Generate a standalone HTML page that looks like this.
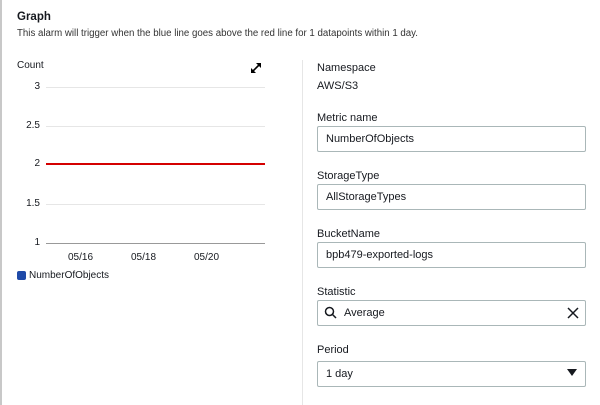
<!DOCTYPE html><html><head><style>
body{margin:0;width:600px;height:405px;background:#fff;font-family:"Liberation Sans",sans-serif;color:#16191f;position:relative;overflow:hidden}
.a{position:absolute}
.lbl{font-size:11px;color:#16191f}
.inp{position:absolute;left:317px;width:269px;height:26px;border:1px solid #aab7b8;border-radius:2px;font-size:11px;line-height:25px;box-sizing:border-box;padding-left:8px}
.yl{position:absolute;font-size:10px;width:40px;text-align:right;left:0}
.g{position:absolute;left:46px;width:219px;height:1px;background:#e6e6e6}
.xl{position:absolute;font-size:10px;top:252px}
</style></head><body>
<div class="a" style="left:0;top:0;width:2px;height:405px;background:#c8c8c8"></div>
<div class="a" style="left:17px;top:11px;font-size:11.5px;font-weight:bold">Graph</div>
<div class="a" style="left:17px;top:28px;font-size:9.7px;color:#333">This alarm will trigger when the blue line goes above the red line for 1 datapoints within 1 day.</div>
<div class="a" style="left:17px;top:60px;font-size:10px">Count</div>
<svg class="a" style="left:249px;top:61px" width="14" height="14" viewBox="0 0 14 14"><path d="M3 11L11 3" stroke="#000" stroke-width="1.6"/><path d="M7 2h5v5zM2 7v5h5z" fill="#000"/></svg>
<div class="yl" style="top:81px">3</div><div class="g" style="top:87px"></div>
<div class="yl" style="top:120px">2.5</div><div class="g" style="top:126px"></div>
<div class="yl" style="top:158px">2</div><div class="a" style="left:46px;top:163px;width:219px;height:2px;background:#d40000"></div>
<div class="yl" style="top:198px">1.5</div><div class="g" style="top:204px"></div>
<div class="yl" style="top:237px">1</div><div class="a" style="left:46px;top:243px;width:219px;height:1px;background:#999"></div>
<div class="xl" style="left:68px">05/16</div><div class="xl" style="left:131px">05/18</div><div class="xl" style="left:194px">05/20</div>
<div class="a" style="left:17px;top:271px;width:9px;height:9px;background:#1f4aa8;border-radius:2px"></div>
<div class="a" style="left:29px;top:270px;font-size:10px">NumberOfObjects</div>
<div class="a" style="left:302px;top:60px;width:1px;height:345px;background:#e6e6e6"></div>
<div class="a lbl" style="left:317px;top:62px">Namespace</div>
<div class="a" style="left:317px;top:80px;font-size:11px">AWS/S3</div>
<div class="a lbl" style="left:317px;top:112px">Metric name</div>
<div class="inp" style="top:126px">NumberOfObjects</div>
<div class="a lbl" style="left:317px;top:170px">StorageType</div>
<div class="inp" style="top:184px">AllStorageTypes</div>
<div class="a lbl" style="left:317px;top:228px">BucketName</div>
<div class="inp" style="top:242px">bpb479-exported-logs</div>
<div class="a lbl" style="left:317px;top:286px">Statistic</div>
<div class="inp" style="top:300px;padding-left:26px">Average</div>
<svg class="a" style="left:324px;top:306px" width="13" height="13"><circle cx="5.5" cy="5.5" r="4" stroke="#16191f" stroke-width="1.5" fill="none"/><path d="M8.5 8.5L12 12" stroke="#16191f" stroke-width="1.5"/></svg>
<svg class="a" style="left:567px;top:307px" width="12" height="12"><path d="M1 1L11 11M11 1L1 11" stroke="#16191f" stroke-width="1.5"/></svg>
<div class="a lbl" style="left:317px;top:344px">Period</div>
<div class="inp" style="top:361px">1 day</div>
<svg class="a" style="left:567px;top:369px" width="10" height="8"><path d="M0 0h10L5 7z" fill="#16191f"/></svg>
</body></html>
